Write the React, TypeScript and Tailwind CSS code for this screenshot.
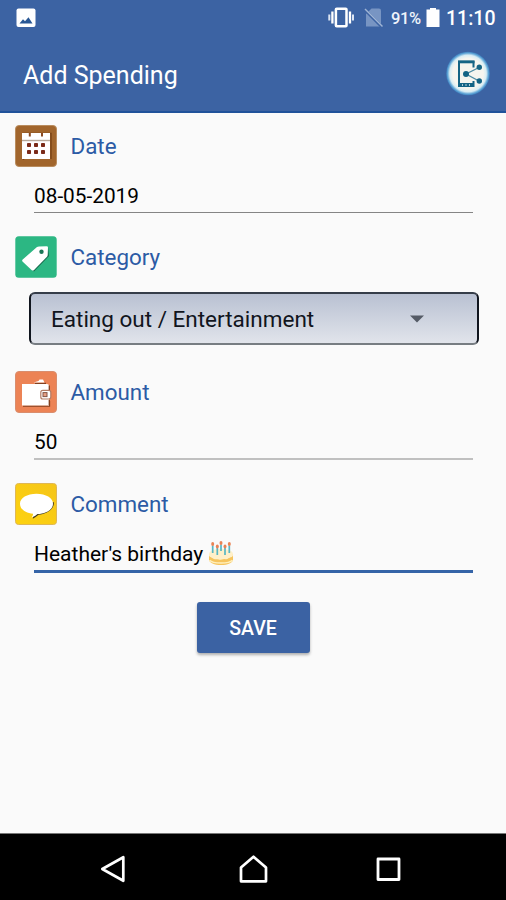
import React from "react";

interface LabelRowProps {
  label: string;
  icon: React.ReactNode;
}

const LabelRow: React.FC<LabelRowProps> = ({ label, icon }) => (
  <div className="flex h-[42px] items-center pl-[14.5px]">
    {icon}
    <span className="ml-[14px] whitespace-nowrap text-[22.4px] leading-[42px] text-[#2c5ba5]">
      {label}
    </span>
  </div>
);

const CalendarIcon = () => (
  <svg width="42" height="42" viewBox="0 0 42 42">
    <rect x="0.5" y="0.5" width="41" height="41" rx="3.5" fill="#a1652c" stroke="#b98c5e" />
    <path d="M8.5 35V8.5H36V34" fill="none" stroke="#7c4517" strokeWidth="1.5" />
    <rect x="7" y="8" width="28" height="26" fill="#fff" />
    <path d="M7 15.5H35" stroke="#b8a99a" strokeWidth="1.4" />
    <path d="M14.8 8V11.5M27 8V11.5" stroke="#8a4a22" strokeWidth="2" />
    <g fill="#7b2a18">
      <rect x="12" y="18" width="4" height="4" rx="0.8" />
      <rect x="19" y="18" width="4" height="4" rx="0.8" />
      <rect x="26" y="18" width="4" height="4" rx="0.8" />
      <rect x="12" y="25" width="4" height="4" rx="0.8" />
      <rect x="19" y="25" width="4" height="4" rx="0.8" />
      <rect x="26" y="25" width="4" height="4" rx="0.8" />
    </g>
  </svg>
);

const TagIcon = () => (
  <svg width="42" height="42" viewBox="0 0 42 42">
    <rect x="0.3" y="0.3" width="41.4" height="41.4" rx="3.5" fill="#2cb783" />
    <path d="M8.5 25.5L23.5 11.5L33 11L34 20L19 35.5Z" fill="#17684c" />
    <path d="M7.5 25.5Q6.7 24.5 7.7 23.5L22 11Q22.8 10.4 24 10.4L31.5 10.2Q33 10.2 33 11.5L32.7 19Q32.6 20 32 20.8L18.8 34.2Q17.8 35 16.8 34.2Z" fill="#fff" />
    <circle cx="26.5" cy="15.7" r="2.2" fill="#1b7657" />
  </svg>
);

const WalletIcon = () => (
  <svg width="42" height="42" viewBox="0 0 42 42">
    <rect x="0.5" y="0.5" width="41" height="41" rx="3.5" fill="#ec8355" stroke="#d98d6d" />
    <path d="M8 35.2H34.5V30M20 12.3H31" fill="none" stroke="#84401f" strokeWidth="1.3" />
    <path d="M18.5 11.5L23.5 10L24.5 8.5H28L29.5 11.5Z" fill="#fff" />
    <path d="M7 13H32Q34 13 34 15V34.5H7Z" fill="#fff" />
    <path d="M34.3 14.5V19M34.3 29V34" stroke="#84401f" strokeWidth="1.3" />
    <rect x="25.8" y="19.4" width="10" height="8.6" rx="2" fill="#fff" stroke="#b27c65" strokeWidth="1.2" />
    <rect x="28" y="21.6" width="4" height="4" fill="#e8a083" stroke="#825546" strokeWidth="1" />
  </svg>
);

const BubbleIcon = () => (
  <svg width="42" height="42" viewBox="0 0 42 42">
    <defs>
      <linearGradient id="bubbleBg" x1="0" y1="1" x2="1" y2="0">
        <stop offset="0" stopColor="#fdd20f" />
        <stop offset="1" stopColor="#f5c519" />
      </linearGradient>
    </defs>
    <rect x="0.5" y="0.5" width="41" height="41" rx="3" fill="url(#bubbleBg)" stroke="#dfb755" />
    <path d="M38.8 19C39.8 25 33 31 23.5 31.8Q21 34 17.8 35.8L19 30Z" fill="#3d3823" />
    <path d="M21.5 10.8C31 10.8 38 15 38 20.7C38 26.5 31 31 22.5 31Q20 33.6 16.5 34.5Q18.3 32.5 18 30.7C10 30 5 26 5 20.7C5 15 12 10.8 21.5 10.8Z" fill="#fff" />
  </svg>
);

const CakeIcon = () => (
  <svg className="ml-[5px] shrink-0" width="26" height="26" viewBox="0 0 26 26">
    <path d="M1 14V19.5C1 23 6.5 25 13 25S25 23 25 19.5V14Z" fill="#f6c45d" />
    <path d="M1.5 20.2Q4 23 13 23T24.5 20.2" fill="none" stroke="#fff0bd" strokeWidth="1.6" />
    <ellipse cx="13" cy="14" rx="12" ry="5.2" fill="#fff0c9" />
    <path d="M1 14.5C1 17.5 3.5 17 5 18.5S9 18.5 11 19.5S15.5 18.5 17.5 19.2S21 17 22.5 17.2S25 16 25 14.5" fill="#fff0c9" />
    <path d="M4.7 5.5V13M9.3 8V15M13 4.5V11M17 8V15M21.3 5.5V13" stroke="#58b7c4" strokeWidth="1.7" />
    <g fill="#e98355">
      <ellipse cx="4.7" cy="4" rx="1.5" ry="1.9" />
      <ellipse cx="9.3" cy="6.5" rx="1.5" ry="1.9" />
      <ellipse cx="13" cy="3" rx="1.5" ry="1.9" />
      <ellipse cx="17" cy="6.5" rx="1.5" ry="1.9" />
      <ellipse cx="21.3" cy="4" rx="1.5" ry="1.9" />
    </g>
  </svg>
);

const StatusBar = () => (
  <div className="flex h-[36px] items-center text-white">
    <svg className="ml-[16px]" width="20" height="20" viewBox="0 0 20 20">
      <rect x="0.5" y="0.5" width="19" height="18.5" rx="2" fill="#fff" />
      <path d="M3.5 15.5L7 11.2L9 13.3L12.5 9.3L16.5 15.5Z" fill="#285795" />
    </svg>
    <svg className="ml-[291px]" width="28" height="22" viewBox="0 0 28 22">
      <rect x="8.9" y="1.7" width="10.6" height="17.6" rx="0.8" fill="none" stroke="#fff" strokeWidth="2.5" />
      <path d="M5.4 4.5V16.5M23 4.5V16.5" stroke="#fff" strokeWidth="2.3" />
      <path d="M2.3 7.5V13.5M26 7.5V13.5" stroke="#dce5f3" strokeWidth="2" />
    </svg>
    <svg className="ml-[9px]" width="20" height="20" viewBox="0 0 20 20">
      <path d="M7.5 0.5H15Q17 0.5 17 2.5V18.5H2V6Z" fill="#7895c3" />
      <path d="M1 2L18.5 19.5" stroke="#3c63a3" strokeWidth="3" />
      <path d="M1 1L18.5 18.5" stroke="#a0b5d5" strokeWidth="1.5" />
    </svg>
    <span className="ml-[7px] w-[32px] pt-[2px] whitespace-nowrap text-[16.5px] font-medium tracking-[-0.4px] text-[#eef3fb]">91%</span>
    <svg className="ml-[3px]" width="14" height="20" viewBox="0 0 14 20">
      <path d="M4 0H10V1.5H13.5V19H0.5V1.5H4Z" fill="#fff" />
    </svg>
    <span className="ml-[6px] pt-[2px] whitespace-nowrap text-[19.5px] font-medium">11:10</span>
  </div>
);

const ShareButton = () => (
  <svg className="mr-[15.5px]" width="46" height="46" viewBox="0 0 46 46">
    <defs>
      <radialGradient id="shareBg">
        <stop offset="0.7" stopColor="#f6f5ef" />
        <stop offset="0.84" stopColor="#d8edf4" />
        <stop offset="0.94" stopColor="#5ca3d6" />
        <stop offset="1" stopColor="#3f80bd" />
      </radialGradient>
    </defs>
    <circle cx="23" cy="22.5" r="21.8" fill="url(#shareBg)" />
    <path d="M28.5 16.5V10.5H14V35H28.5V30" fill="none" stroke="#146485" strokeWidth="2" />
    <path d="M13 11H29.5" stroke="#146485" strokeWidth="2.6" />
    <path d="M14 33.8H28.5" stroke="#146485" strokeWidth="3.6" />
    <path d="M17.5 33V35M21 33V35M24.5 33V35" stroke="#d9e7e9" strokeWidth="0.8" />
    <path d="M34 16.5L21 23L34 30" fill="none" stroke="#4c8ba4" strokeWidth="1.3" />
    <circle cx="34.3" cy="16.3" r="2.7" fill="#146485" />
    <circle cx="21" cy="23" r="3" fill="#146485" />
    <circle cx="34.3" cy="30" r="2.7" fill="#146485" />
  </svg>
);

const NavBar = () => (
  <div className="flex h-[67px] items-center border-t border-[#777] bg-black pt-[3px]">
    <svg className="ml-[99px]" width="28" height="30" viewBox="0 0 28 30">
      <path d="M24.3 3.2V26.8L3.3 15Z" fill="none" stroke="#fff" strokeWidth="2.7" strokeLinejoin="round" />
    </svg>
    <svg className="ml-[111px]" width="30" height="30" viewBox="0 0 30 30">
      <path d="M15.5 2.7L28 13.5V27.3H3V13.5Z" fill="none" stroke="#fff" strokeWidth="2.7" strokeLinejoin="round" />
    </svg>
    <svg className="ml-[107px]" width="26" height="26" viewBox="0 0 26 26">
      <rect x="3" y="3" width="21" height="20.5" fill="none" stroke="#fff" strokeWidth="2.8" strokeLinejoin="round" />
    </svg>
  </div>
);

const App: React.FC = () => {
  return (
    <div className="flex h-[900px] w-[506px] flex-col overflow-hidden bg-[#fafafa] font-['Roboto',sans-serif] text-black">
      <header className="h-[113px] shrink-0 border-b-2 border-[#20529a] bg-[#3c63a3]">
        <StatusBar />
        <div className="flex h-[75px] items-center justify-between">
          <h1 className="ml-[23px] pt-[4px] whitespace-nowrap text-[25px] text-white">Add Spending</h1>
          <ShareButton />
        </div>
      </header>

      <main className="flex-1 pt-[11.5px]">
        <LabelRow label="Date" icon={<CalendarIcon />} />
        <div className="mr-[33px] ml-[34px] h-[46px] border-b border-[#858585] pt-[14px] text-[20.8px] leading-[30px]">
          08-05-2019
        </div>

        <div className="mt-[23px]">
          <LabelRow label="Category" icon={<TagIcon />} />
          <div className="mt-[14px] mr-[27.5px] ml-[28.5px] flex h-[53px] items-center rounded-[6px] border-2 border-t-[#353d49] border-r-[#10151e] border-b-[#777d82] border-l-[#10151e] bg-linear-to-b from-[#b9c1d2] to-[#e1e4eb] pl-[20.5px]">
            <span className="w-[359px] pt-[3px] whitespace-nowrap text-[22.5px] text-[#11151d]">
              Eating out / Entertainment
            </span>
            <svg className="mt-[2px]" width="14" height="8" viewBox="0 0 14 8">
              <path d="M0 0.5H14L7 7.5Z" fill="#555b66" />
            </svg>
          </div>
        </div>

        <div className="mt-[26px]">
          <LabelRow label="Amount" icon={<WalletIcon />} />
          <div className="mr-[33px] ml-[34px] h-[47px] border-b-2 border-[#c0c0c0] pt-[14px] text-[20.8px] leading-[30px]">
            50
          </div>
        </div>

        <div className="mt-[23px]">
          <LabelRow label="Comment" icon={<BubbleIcon />} />
          <div className="mr-[33px] ml-[34px] flex h-[48px] items-center border-b-3 border-[#3564a7] pt-[12px] text-[21px]">
            <span className="pt-[4px] whitespace-nowrap">Heather's birthday</span>
            <CakeIcon />
          </div>
        </div>

        <button className="mx-auto mt-[29px] block h-[51px] w-[113px] rounded-[3px] bg-[#3b62a3] pt-[3px] text-[19.5px] font-medium text-white shadow-[0_2px_3px_rgba(0,0,0,0.3)]">
          SAVE
        </button>
      </main>

      <NavBar />
    </div>
  );
};

export default App;
